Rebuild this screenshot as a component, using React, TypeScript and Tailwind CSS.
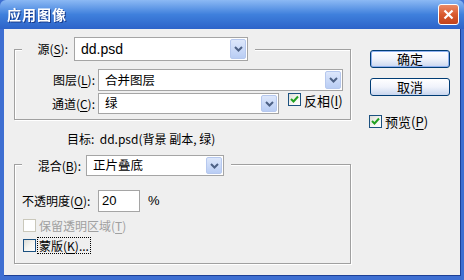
import React from "react";

const cjk = { fontFamily: '"Noto Sans CJK SC", "DejaVu Sans", sans-serif' };
const latin = { fontFamily: '"Liberation Sans", "Noto Sans CJK SC", sans-serif' };

function U({ children }: { children: React.ReactNode }) {
  return <span className="underline underline-offset-2">{children}</span>;
}

function Chevron() {
  return (
    <svg width="9" height="6" viewBox="0 0 9 6">
      <path d="M1 1 L4.5 4.5 L8 1" fill="none" stroke="#4d6185" strokeWidth="2" />
    </svg>
  );
}

function Combo({ value, w, h, big }: { value: string; w: string; h: string; big?: boolean }) {
  return (
    <div className={`${w} ${h} flex bg-white border border-[#a5a5a5] p-px`}>
      <div
        className={`flex-1 flex items-center pl-[5px] text-black ${big ? "text-[14px]" : "text-[12.5px]"}`}
        style={big ? latin : undefined}
      >
        {value}
      </div>
      <div className="w-[16px] flex items-center justify-center border border-[#b6c8ee] rounded-[2px] bg-gradient-to-b from-[#dde7fb] to-[#b9cdf4]">
        <Chevron />
      </div>
    </div>
  );
}

function Check({ checked, disabled }: { checked?: boolean; disabled?: boolean }) {
  return (
    <div
      className={`w-[13px] h-[13px] shrink-0 border flex items-center justify-center ${
        disabled
          ? "border-[#cac8bb] bg-white"
          : "border-[#1c5180] bg-gradient-to-br from-[#dcdcd6] via-[#f4f4f0] to-white"
      }`}
    >
      {checked && (
        <svg width="9" height="9" viewBox="0 0 9 9">
          <path d="M1 4 L3.5 6.5 L8 1.5" fill="none" stroke="#21a121" strokeWidth="2" />
        </svg>
      )}
    </div>
  );
}

function XpButton({ label, primary }: { label: string; primary?: boolean }) {
  return (
    <div
      className={`w-[80px] h-[18px] rounded-[3px] border border-[#003c74] flex items-center justify-center text-[13px] text-black bg-gradient-to-b from-white via-[#f0f3fb] to-[#c9d6ee] ${
        primary ? "shadow-[inset_0_0_0_1px_#8eb0f0]" : ""
      }`}
    >
      {label}
    </div>
  );
}

const group =
  "border border-[#a0a0a0] shadow-[inset_1px_1px_0_#ffffff,1px_1px_0_#ffffff]";

export default function App() {
  return (
    <div className="w-[464px] h-[280px] bg-[#3e6fd2] flex flex-col select-none" style={cjk}>
      {/* title bar */}
      <div className="h-[29px] shrink-0 flex items-center pl-[7px] pr-[5px] rounded-t-[6px] bg-gradient-to-b from-[#8cb9f4] via-[#3f80dc] to-[#2d63c9]">
        <span className="text-white font-bold text-[14px] tracking-[1px] drop-shadow-[1px_1px_0_#1a3c8c]">应用图像</span>
        <div className="ml-auto w-[21px] h-[21px] rounded-[3px] border border-white bg-gradient-to-b from-[#ea8a66] via-[#d95a2e] to-[#c1431c] flex items-center justify-center">
          <svg width="11" height="11" viewBox="0 0 11 11">
            <path d="M1.5 1.5 L9.5 9.5 M9.5 1.5 L1.5 9.5" stroke="#fff" strokeWidth="2.2" />
          </svg>
        </div>
      </div>

      {/* client area */}
      <div className="ml-[4px] mr-[3px] mb-[3px] h-[247px] bg-[#efefef] border-r border-b border-[#1d3f95] flex pl-[10px] pt-[8px] text-[12px] text-black">
        {/* left column */}
        <div className="w-[337px] flex flex-col">
          {/* group 1 */}
          <div className={`mt-[12px] pb-[5px] ${group}`}>
            <div className="-mt-[13px] ml-[7px] w-[233px] h-[24px] bg-[#efefef] flex items-center">
              <span className="w-[46px] text-right">源(<U>S</U>):</span>
              <div className="ml-[6px]">
                <Combo value="dd.psd" w="w-[174px]" h="h-[24px]" big />
              </div>
            </div>
            <div className="mt-[8px] h-[22px] flex items-center">
              <span className="w-[80px] text-right">图层(<U>L</U>):</span>
              <div className="ml-[3px]">
                <Combo value="合并图层" w="w-[245px]" h="h-[22px]" />
              </div>
            </div>
            <div className="mt-[2px] h-[21px] flex items-center">
              <span className="w-[80px] text-right">通道(<U>C</U>):</span>
              <div className="ml-[3px]">
                <Combo value="绿" w="w-[181px]" h="h-[21px]" />
              </div>
              <div className="ml-[9px] self-start">
                <Check checked />
              </div>
              <span className="ml-[3px] self-start -mt-[2px] text-[13px]">反相(<U>I</U>)</span>
            </div>
          </div>

          <div className="mt-[11px] h-[16px] pl-[53px] flex items-center">
            目标:&nbsp;&nbsp;dd.psd(背景 副本, 绿)
          </div>

          {/* group 2 */}
          <div className={`mt-[17px] pb-[9px] ${group}`}>
            <div className="-mt-[10px] ml-[7px] w-[209px] h-[21px] bg-[#efefef] flex items-center">
              <span className="w-[59px] text-right">混合(<U>B</U>):</span>
              <div className="ml-[5px]">
                <Combo value="正片叠底" w="w-[138px]" h="h-[21px]" />
              </div>
            </div>
            <div className="mt-[14px] h-[22px] flex items-center pl-[7px]">
              <span className="w-[76px]">不透明度(<U>O</U>):</span>
              <div className="w-[42px] h-[22px] bg-white border border-[#a5a5a5] flex items-center pl-[3px] text-[13px]" style={latin}>
                20
              </div>
              <span className="ml-[8px] text-[13px]" style={latin}>%</span>
            </div>
            <div className="mt-[5px] h-[17px] flex items-center pl-[8px]">
              <Check disabled />
              <span className="ml-[3px] text-[#a0a0a0]">保留透明区域(<U>T</U>)</span>
            </div>
            <div className="mt-[3px] h-[17px] flex items-center pl-[8px]">
              <Check />
              <span className="ml-[1px] px-[1px] h-[17px] flex items-center border border-dotted border-black">
                蒙版(<U>K</U>)...
              </span>
            </div>
          </div>
        </div>

        {/* right column */}
        <div className="ml-[19px] pt-[13px] flex flex-col">
          <XpButton label="确定" primary />
          <div className="mt-[10px]">
            <XpButton label="取消" />
          </div>
          <div className="mt-[16px] -ml-px flex items-center">
            <Check checked />
            <span className="ml-[3px] text-[13px]">预览(<U>P</U>)</span>
          </div>
        </div>
      </div>
    </div>
  );
}
